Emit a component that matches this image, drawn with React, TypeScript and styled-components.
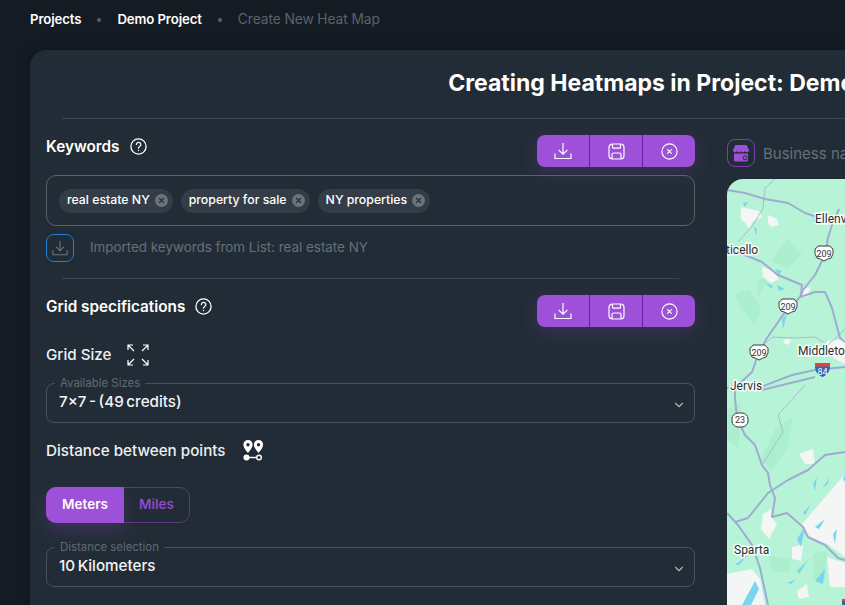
import styled, { createGlobalStyle } from 'styled-components';
import { ChevronDown } from 'lucide-react';

const GlobalStyle = createGlobalStyle`
  html, body {
    margin: 0;
    height: 605px;
    overflow: hidden;
    background: #151b23;
    font-family: Inter, "Noto Sans", sans-serif;
  }
  * { box-sizing: border-box; }
`;

const Page = styled.div`
  width: 845px;
  height: 605px;
  overflow: hidden;
  padding: 0 0 0 30px;
`;

const Crumbs = styled.nav`
  height: 50px;
  padding-bottom: 12px;
  display: flex;
  align-items: center;
  letter-spacing: -0.1px;
`;

const Crumb = styled.span<{ $muted?: boolean }>`
  color: ${({ $muted }) => ($muted ? '#59636e' : '#fff')};
  font-size: ${({ $muted }) => ($muted ? '13.8px' : '13.2px')};
  font-weight: ${({ $muted }) => ($muted ? 400 : 600)};
`;

const Dot = styled.i`
  width: 4px;
  height: 4px;
  margin: 2px 16px 0;
  border-radius: 50%;
  background: #59636e;
`;

const Panel = styled.section`
  width: 1328px;
  height: 700px;
  border-radius: 16px;
  background: #222c36;
  box-shadow: 0 0 12px rgba(0, 0, 0, 0.25);
`;

const Title = styled.h1`
  margin: 0;
  height: 68px;
  padding-bottom: 2px;
  display: flex;
  align-items: center;
  justify-content: center;
  font-size: 23px;
  font-weight: 700;
  color: #fff;
`;

const TopRule = styled.div`
  height: 1px;
  margin-left: 32px;
  background: #3a4650;
`;

const Columns = styled.div`
  display: grid;
  grid-template-columns: 649px 1fr;
  column-gap: 32px;
  padding: 16px 16px 0;
`;

const HeadRow = styled.div`
  display: flex;
  justify-content: space-between;
  align-items: flex-start;
`;

const Heading = styled.h2`
  margin: 0;
  height: 22px;
  display: flex;
  align-items: center;
  gap: 10px;
  font-size: 15.3px;
  font-weight: 600;
  color: #fff;
`;

const ActionGroup = styled.div`
  display: flex;
  width: 158px;
  height: 32px;
  border-radius: 8px;
  overflow: hidden;
  background: #9d50d8;
  box-shadow: 0 6px 18px rgba(157, 80, 216, 0.2);
`;

const ActionButton = styled.button`
  flex: 1;
  padding: 0;
  display: flex;
  align-items: center;
  justify-content: center;
  border: 0;
  background: transparent;
  color: #fff;

  & + & {
    border-left: 1px solid #6a1cae;
  }
`;

const KeywordBox = styled.div`
  height: 51px;
  margin-top: 8px;
  padding: 0 12px;
  display: flex;
  align-items: center;
  gap: 8px;
  border: 1px solid #5a626b;
  border-radius: 10px;
`;

const Chip = styled.span`
  height: 24px;
  padding: 0 5px 0 8px;
  display: flex;
  align-items: center;
  gap: 5px;
  border-radius: 12px;
  background: #343d47;
  color: #fff;
  font-size: 12.3px;
  font-weight: 500;
`;

const ChipText = styled.span`
  margin-top: -2px;
`;

const ChipClose = styled.i`
  width: 13px;
  height: 13px;
  display: flex;
  align-items: center;
  justify-content: center;
  border-radius: 50%;
  background: #6b737c;
  color: #2a323b;
`;

const ImportRow = styled.div`
  margin-top: 8px;
  display: flex;
  align-items: center;
  gap: 16px;
  color: #66707a;
  font-size: 13.4px;
`;

const ImportText = styled.span`
  margin-top: -2px;
`;

const ImportIcon = styled.span`
  width: 28px;
  height: 28px;
  display: flex;
  align-items: center;
  justify-content: center;
  border: 1px solid #1b80d8;
  border-radius: 8px;
  color: #6d7781;
`;

const Rule = styled.div`
  height: 1px;
  margin: 16px 16px;
  background: #3a4650;
`;

const Label = styled.div<{ $gap: number }>`
  height: 22px;
  margin-top: 17px;
  padding-bottom: 1px;
  display: flex;
  align-items: center;
  gap: ${({ $gap }) => $gap}px;
  color: #eef1f4;
  font-size: 15.2px;
  font-weight: 500;
`;

const SelectField = styled.fieldset<{ $top: number }>`
  position: relative;
  height: 47px;
  min-width: 0;
  margin: ${({ $top }) => $top}px 0 0;
  padding: 0 12px;
  border: 1px solid #47525c;
  border-radius: 8px;
`;

const SelectLegend = styled.legend`
  margin-left: -4px;
  padding: 0 5px;
  font-size: 11.4px;
  line-height: 14px;
  color: #5f6a75;
`;

const SelectValue = styled.div`
  margin-top: 1px;
  color: #f3f5f7;
  font-size: 15.2px;
  font-weight: 500;
  line-height: 22px;
  word-spacing: -1.5px;
`;

const SelectChevron = styled(ChevronDown)`
  position: absolute;
  right: 8px;
  top: 8px;
  color: #aeb5bc;
`;

const Toggle = styled.div`
  width: 144px;
  height: 36px;
  margin-top: 25px;
  display: flex;
  border: 1px solid #5d3a80;
  border-radius: 10px;
  font-size: 13.5px;
  font-weight: 600;
`;

const ToggleOption = styled.span<{ $active?: boolean }>`
  flex: ${({ $active }) => ($active ? '0 0 78px' : 1)};
  margin: ${({ $active }) => ($active ? '-1px 0 -1px -1px' : 0)};
  padding-bottom: 2px;
  display: flex;
  align-items: center;
  justify-content: center;
  border-radius: ${({ $active }) => ($active ? '10px 0 0 10px' : 0)};
  background: ${({ $active }) => ($active ? '#9d50d8' : 'transparent')};
  color: ${({ $active }) => ($active ? '#fff' : '#9248cf')};
  box-shadow: ${({ $active }) => ($active ? '0 8px 18px rgba(157, 80, 216, 0.22)' : 'none')};
`;

const BusinessRow = styled.div`
  height: 32px;
  padding-top: 4px;
  display: flex;
  align-items: center;
  gap: 8px;
  color: #66707a;
  font-size: 15px;
`;

const BusinessIcon = styled.span`
  width: 28px;
  height: 28px;
  flex: none;
  display: flex;
  align-items: center;
  justify-content: center;
  border: 1px solid #7d3db8;
  border-radius: 8px;
`;

const MapFrame = styled.div`
  margin-top: 12px;
  height: 500px;
  border-radius: 16px;
  overflow: hidden;
  background: #b7f3d7;
`;

const MapSvg = styled.svg`
  display: block;
`;

const MapLabel = styled.text`
  font-family: Roboto, sans-serif;
  font-size: 12px;
  fill: #2b2f33;
  stroke: #fff;
  stroke-width: 3px;
  stroke-opacity: 0.85;
  paint-order: stroke;
`;

const ShieldText = styled.text<{ $light?: boolean }>`
  font-family: Roboto, sans-serif;
  font-size: 9px;
  fill: ${({ $light }) => ($light ? '#fff' : '#333')};
  text-anchor: middle;
`;

const DownloadIcon = ({ size = 18 }: { size?: number }) => (
  <svg width={size} height={size} viewBox="0 0 18 18" fill="none" stroke="currentColor" strokeWidth="1.2">
    <path d="M9 1v11M4.600 7.800 9 12.200l4.400-4.400M1 11.500v5h16v-5" />
  </svg>
);

const SaveIcon = () => (
  <svg width="17" height="17" viewBox="0 0 17 17" fill="none" stroke="currentColor" strokeWidth="1.2">
    <rect x="1" y="1" width="15" height="15" rx="3.5" />
    <path d="M4.500 1v3.200c0 .7.400 1 1 1h6c.600 0 1-.3 1-1V1M4 16v-4.500c0-1 .6-1.500 1.500-1.500h6c.9 0 1.500.5 1.500 1.500V16" />
  </svg>
);

const CloseCircleIcon = () => (
  <svg width="17" height="17" viewBox="0 0 17 17" fill="none" stroke="currentColor" strokeWidth="1.1">
    <circle cx="8.5" cy="8.5" r="7.6" />
    <path d="m6.300 6.300 4.400 4.400M10.700 6.300l-4.400 4.400" />
  </svg>
);

const HelpIcon = () => (
  <svg width="17" height="17" viewBox="0 0 17 17" fill="none" stroke="#fff" strokeWidth="1.3" strokeLinecap="round">
    <circle cx="8.5" cy="8.5" r="7.6" />
    <path d="M6.400 6.600a2.200 2.200 0 1 1 3.300 1.900c-.8.500-1.200.9-1.200 1.700" />
    <path d="M8.500 12.400v.1" />
  </svg>
);

const ExpandIcon = () => (
  <svg width="22" height="22" viewBox="0 0 22 22" fill="none" stroke="#fff" strokeWidth="1.2">
    <path d="M1 6V1h5M1 1l6 6M16 1h5v5M21 1l-6 6M1 16v5h5M1 21l6-6M16 21h5v-5M21 21l-6-6" />
  </svg>
);

const PinsIcon = () => (
  <svg width="21" height="21" viewBox="0 0 21 21" fill="#fff">
    <path fillRule="evenodd" d="M5 0a4.600 4.600 0 0 1 4.600 4.600C9.600 7.600 6.800 11 5 13 3.200 11 .4 7.600.4 4.600A4.600 4.600 0 0 1 5 0Zm0 3a1.700 1.700 0 1 0 0 3.400A1.700 1.700 0 0 0 5 3Z" />
    <path fillRule="evenodd" d="M15.500 0a4.600 4.600 0 0 1 4.600 4.600c0 3-2.800 6.400-4.600 8.400-1.800-2-4.600-5.400-4.600-8.400A4.600 4.600 0 0 1 15.500 0Zm0 3a1.700 1.700 0 1 0 0 3.400 1.700 1.700 0 0 0 0-3.400Z" />
    <circle cx="3.500" cy="17.500" r="3" />
    <path d="M6 16.800h7v1.400H6z" />
    <circle cx="16" cy="17.500" r="2.300" fill="none" stroke="#fff" strokeWidth="1.400" />
  </svg>
);

const StoreIcon = () => (
  <svg width="18" height="18" viewBox="0 0 18 18">
    <path fill="#9d50d8" d="M3.500 1h11l2.500 5c0 1.500-1 2.300-2.100 2.300-1 0-1.700-.6-2-1.300-.4.800-1.200 1.300-2 1.300S9.300 7.800 9 7c-.3.800-1 1.300-1.900 1.300S5.500 7.800 5.100 7c-.3.700-1 1.300-2 1.300C2 8.300 1 7.500 1 6l2.500-5Z" />
    <path fill="#9d50d8" d="M2 9.400h14V16a1.500 1.500 0 0 1-1.500 1.500h-11A1.500 1.500 0 0 1 2 16V9.400Z" />
    <circle cx="13" cy="13.800" r="2" fill="none" stroke="#222c36" strokeWidth="1" />
  </svg>
);

const ChipX = () => (
  <svg width="7" height="7" viewBox="0 0 7 7" stroke="currentColor" strokeWidth="1.400">
    <path d="m1 1 5 5M6 1 1 6" />
  </svg>
);

const Actions = () => (
  <ActionGroup>
    <ActionButton><DownloadIcon /></ActionButton>
    <ActionButton><SaveIcon /></ActionButton>
    <ActionButton><CloseCircleIcon /></ActionButton>
  </ActionGroup>
);

// US route shield, bumped at the top and pointed at the bottom
const Shield = ({ x, y, label }: { x: number; y: number; label: string }) => (
  <g>
    <path
      transform={`translate(${x} ${y})`}
      d="M-9-5q2-1 3-3H6q1 2 3 3 1 5-2 9-4 1-7 3-3-2-7-3-3-4-2-9Z"
      fill="#fff"
      stroke="#3c3c3c"
      strokeWidth="1"
    />
    <ShieldText x={x} y={y + 3}>{label}</ShieldText>
  </g>
);

const MAJOR_ROADS = [
  'M0 11 18 14 38 20 61 24 78 34 90 38 H100',
  'M112 30 105 46 101 59 98 76 88 96 76 111 73 118 56 136 40 159 31 176 25 193 11 206 0 209',
  'M0 71 18 76 35 83 51 96 75 106 74 116',
  'M73 118 88 113H98L105 129 113 159 118 163',
  'M31 209 65 196 88 191 118 188',
  'M35 211 88 198',
  'M8 210 8 219 10 239 18 256 28 266 35 286 41 294 43 306 48 319 45 338 60 334 76 348 81 358 98 366 111 379 118 381',
  'M8 343 21 339 41 314 61 301 81 291 98 276 118 273',
  'M0 334 11 346 25 366 33 389 41 426',
];

const MINOR_ROADS = [
  'M48 0 38 9 36 29 26 46 11 63',
  'M40 163 45 158 65 159 88 158 101 166 118 150',
  'M78 206 51 236 56 253 35 286',
];

const WHITE_AREAS = [
  'M14 28 32 32 35 38 26 42 22 50 18 44 14 40Z',
  'M41 36 50 40 52 46 44 48 41 44Z',
  'M35 88 46 92 52 100 44 104 36 98Z',
  'M76 110 84 108 80 118 75 118Z',
  'M58 160 64 160 62 166 56 164Z',
  'M100 162 118 160V185L108 180 98 172Z',
  'M72 275 86 270 88 285 78 285Z',
  'M75 345 118 295V378L100 365 82 358Z',
  'M100 378 118 384V408H103Z',
  'M36 335 44 330 46 340 50 345 42 360 34 350Z',
  'M65 368 76 366 74 382 65 380Z',
  'M0 395 25 390 33 400 38 426H0Z',
  'M70 412 80 405 82 418 72 420Z',
];

const DARK_GREEN = [
  'M8 115 22 110 34 130 28 146 14 130Z',
  'M30 100 42 98 30 120Z',
  'M60 60 75 75 60 90 44 82Z',
  'M48 250 66 238 60 270 44 292 34 280Z',
  'M42 376 64 380 62 394 44 392Z',
  'M86 375 100 372 98 400 86 400Z',
  'M0 230 14 225 12 270 0 260Z',
];

const WATER = [
  'M16 24 21 23 18 28Z',
  'M27 48 30 50 29 57Z',
  'M48 90 55 92 52 96Z',
  'M38 103 46 107 44 110Z',
  'M50 106 58 110 52 112Z',
  'M55 140 60 135 56 150Z',
  'M85 40 95 43 90 45Z',
  'M86 305 90 298 88 312Z',
  'M96 308 103 298 100 306Z',
  'M116 300 120 290V306Z',
  'M76 334 84 325 78 336Z',
  'M88 348 98 340 92 350Z',
  'M70 360 78 348 74 368Z',
  'M106 355 110 350 108 365Z',
  'M8 386 22 375 12 386Z',
  'M70 392 82 380 72 395Z',
  'M88 402 98 390 96 405Z',
  'M60 404 70 400 64 405Z',
  'M15 426 28 402 32 410 24 426Z',
];

const MapDrawing = () => (
  <MapSvg width="800" height="500" viewBox="0 0 800 500">
    {DARK_GREEN.map(d => <path key={d} d={d} fill="#acefcf" />)}
    {WHITE_AREAS.map(d => <path key={d} d={d} fill="#f3f6f5" />)}
    {WATER.map(d => <path key={d} d={d} fill="#7cd5ee" />)}
    {MINOR_ROADS.map(d => <path key={d} d={d} fill="none" stroke="#a9bcc8" strokeWidth="1" />)}
    {MAJOR_ROADS.map(d => <path key={d} d={d} fill="none" stroke="#9fabd2" strokeWidth="2" strokeLinejoin="round" />)}
    <MapLabel x="88" y="44">Ellenville</MapLabel>
    <MapLabel x="-1" y="75">ticello</MapLabel>
    <MapLabel x="71" y="176">Middletown</MapLabel>
    <MapLabel x="3" y="211">Jervis</MapLabel>
    <MapLabel x="7" y="375">Sparta</MapLabel>
    <Shield x={97} y={75} label="209" />
    <Shield x={61} y={128} label="209" />
    <Shield x={32} y={174} label="209" />
    <rect x={5} y={234} width={16} height={14} rx={6} fill="#fff" stroke="#3c3c3c" />
    <ShieldText x={13} y={244}>23</ShieldText>
    <path d="M88 184h15v3c0 6-3 9-7.500 11-4.500-2-7.500-5-7.500-11Z" fill="#2f66b5" />
    <rect x="88" y="184" width="15" height="3.500" fill="#d9483b" />
    <ShieldText $light x={95.5} y={196}>84</ShieldText>
    <path d="M115 421h10v6h-10Z" fill="#2f66b5" />
    <rect x="115" y="420" width="10" height="2" fill="#d9483b" />
  </MapSvg>
);

export default function App() {
  return (
    <Page>
      <GlobalStyle />
      <Crumbs>
        <Crumb>Projects</Crumb>
        <Dot />
        <Crumb>Demo Project</Crumb>
        <Dot />
        <Crumb $muted>Create New Heat Map</Crumb>
      </Crumbs>
      <Panel>
        <Title>Creating Heatmaps in Project: Demo Project</Title>
        <TopRule />
        <Columns>
          <div>
            <HeadRow>
              <Heading>Keywords <HelpIcon /></Heading>
              <Actions />
            </HeadRow>
            <KeywordBox>
              {['real estate NY', 'property for sale', 'NY properties'].map(word => (
                <Chip key={word}>
                  <ChipText>{word}</ChipText>
                  <ChipClose><ChipX /></ChipClose>
                </Chip>
              ))}
            </KeywordBox>
            <ImportRow>
              <ImportIcon><DownloadIcon size={16} /></ImportIcon>
              <ImportText>Imported keywords from List: real estate NY</ImportText>
            </ImportRow>
            <Rule />
            <HeadRow>
              <Heading>Grid specifications <HelpIcon /></Heading>
              <Actions />
            </HeadRow>
            <Label $gap={16}>Grid Size <ExpandIcon /></Label>
            <SelectField $top={10}>
              <SelectLegend>Available Sizes</SelectLegend>
              <SelectValue>7×7 - (49 credits)</SelectValue>
              <SelectChevron size={14} />
            </SelectField>
            <Label $gap={17}>Distance between points <PinsIcon /></Label>
            <Toggle>
              <ToggleOption $active>Meters</ToggleOption>
              <ToggleOption>Miles</ToggleOption>
            </Toggle>
            <SelectField $top={17}>
              <SelectLegend>Distance selection</SelectLegend>
              <SelectValue>10 Kilometers</SelectValue>
              <SelectChevron size={14} />
            </SelectField>
          </div>
          <div>
            <BusinessRow>
              <BusinessIcon><StoreIcon /></BusinessIcon>
              Business name
            </BusinessRow>
            <MapFrame><MapDrawing /></MapFrame>
          </div>
        </Columns>
      </Panel>
    </Page>
  );
}
